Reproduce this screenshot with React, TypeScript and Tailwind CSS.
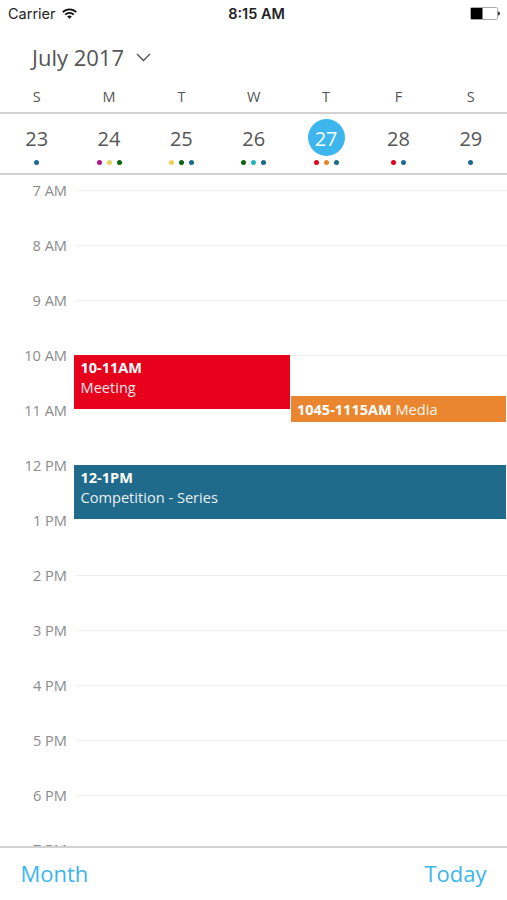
import React from "react";

interface Day {
  letter: string;
  date: number;
  dots: string[];
  selected?: boolean;
}

interface Hour {
  label: string;
  hideLine?: boolean;
}

interface CalendarEvent {
  time: string;
  title: string;
  inline?: boolean;
  className: string;
}

const days: Day[] = [
  { letter: "S", date: 23, dots: ["bg-[#1c6a8c]"] },
  { letter: "M", date: 24, dots: ["bg-[#b5128c]", "bg-[#ecd25c]", "bg-[#0b6410]"] },
  { letter: "T", date: 25, dots: ["bg-[#ecd25c]", "bg-[#0b6410]", "bg-[#1c6a8c]"] },
  { letter: "W", date: 26, dots: ["bg-[#0b6410]", "bg-[#23b5b5]", "bg-[#1c6a8c]"] },
  { letter: "T", date: 27, dots: ["bg-[#e3001b]", "bg-[#ea862c]", "bg-[#1c6a8c]"], selected: true },
  { letter: "F", date: 28, dots: ["bg-[#e3001b]", "bg-[#1c6a8c]"] },
  { letter: "S", date: 29, dots: ["bg-[#1c6a8c]"] },
];

const hours: Hour[] = [
  { label: "7 AM" },
  { label: "8 AM" },
  { label: "9 AM" },
  { label: "10 AM" },
  { label: "11 AM", hideLine: true },
  { label: "12 PM" },
  { label: "1 PM", hideLine: true },
  { label: "2 PM" },
  { label: "3 PM" },
  { label: "4 PM" },
  { label: "5 PM" },
  { label: "6 PM" },
  { label: "7 PM", hideLine: true },
];

// Events are placed over the hour grid, 55px per hour
const events: CalendarEvent[] = [
  {
    time: "10-11AM",
    title: "Meeting",
    className: "left-[74px] top-[179.5px] w-[215.5px] h-[54px] pt-[3.5px] bg-[#e6001b]",
  },
  {
    time: "1045-1115AM",
    title: "Media",
    inline: true,
    className: "left-[290.5px] top-[221px] w-[215px] h-[26px] pt-[3.5px] bg-[#ea862f]",
  },
  {
    time: "12-1PM",
    title: "Competition - Series",
    className: "left-[74px] top-[289.5px] w-[431.5px] h-[54px] pt-[3.5px] bg-[#206b8c]",
  },
];

const StatusBar: React.FC = () => (
  <div className="grid grid-cols-3 items-center h-[28px] pl-[8px] pr-[7px] font-['Inter',sans-serif] text-[14.5px] text-[#222]">
    <div className="flex items-center gap-[6px] -mt-px">
      <span>Carrier</span>
      <svg className="-mt-px" width="15" height="11" viewBox="0 0 15 11" fill="none" stroke="#111" strokeWidth="1.8">
        <path d="M0.8 4.2C4.4 0.4 10.6 0.4 14.2 4.2" />
        <path d="M3.2 6.7C5.6 4.2 9.4 4.2 11.8 6.7" />
        <path d="M7.5 10.8L5.2 8.5C6.5 7.3 8.5 7.3 9.8 8.5Z" fill="#111" stroke="none" />
      </svg>
    </div>
    <span className="-mt-px pl-[5px] text-center font-semibold">8:15 AM</span>
    <svg className="justify-self-end -mt-px" width="30" height="13" viewBox="0 0 30 13">
      <rect x="0.5" y="0.5" width="27" height="12" rx="1" fill="#fff" stroke="#aaa" />
      <rect x="1" y="1" width="11.5" height="11" fill="#000" />
      <path d="M28 4.5a2 2 0 0 1 0 4Z" fill="#333" />
    </svg>
  </div>
);

const DayCell: React.FC<{ day: Day }> = ({ day }) => (
  <div className="flex flex-col items-center pt-[5px]">
    <span
      className={
        day.selected
          ? "size-[37px] rounded-full bg-[#3cb6ec] text-white text-center text-[20px] leading-[39px]"
          : "size-[37px] text-center text-[20px] leading-[39px]"
      }
    >
      {day.date}
    </span>
    <div className="flex gap-[5px] mt-[4px]">
      {day.dots.map((dot, i) => (
        <span key={i} className={`size-[5px] rounded-full ${dot}`} />
      ))}
    </div>
  </div>
);

const EventBlock: React.FC<{ event: CalendarEvent }> = ({ event }) => (
  <div className={`absolute pl-[6.5px] text-[14.6px] leading-[19.5px] text-white ${event.className}`}>
    <span className={event.inline ? "font-bold text-[14.5px]" : "block font-bold text-[14.5px]"}>
      {event.time}
    </span>
    {event.inline && " "}
    <span className="text-white/90">{event.title}</span>
  </div>
);

const App: React.FC = () => {
  return (
    <div className="flex flex-col w-full h-[900px] overflow-hidden bg-white font-['Open_Sans',sans-serif] text-[#555]">
      <StatusBar />

      {/* Month picker */}
      <button className="flex items-center gap-[12px] h-[58px] pl-[32px] text-[22px]">
        July 2017
        <svg width="15" height="9" viewBox="0 0 15 9" fill="none" stroke="#555" strokeWidth="1.4">
          <path d="M1 1L7.5 7.5L14 1" />
        </svg>
      </button>

      {/* Weekday letters */}
      <div className="grid grid-cols-7 h-[28px] pl-[0.5px] border-b-2 border-[#d2d2d2] text-center text-[14.5px] leading-[22px]">
        {days.map((day) => (
          <span key={day.date}>{day.letter}</span>
        ))}
      </div>

      {/* Week */}
      <div className="grid grid-cols-7 h-[61px] pl-[0.5px] border-b-2 border-[#d2d2d2]">
        {days.map((day) => (
          <DayCell key={day.date} day={day} />
        ))}
      </div>

      {/* Timeline */}
      <div className="relative h-[671px] overflow-hidden">
        <div>
          {hours.map((hour) => (
            <div
              key={hour.label}
              className="flex h-[55px] text-[14.6px] leading-[31px] text-[#8c8c8c] last:leading-[28px]"
            >
              <span className="w-[67px] text-right">{hour.label}</span>
              {!hour.hideLine && <span className="flex-1 ml-[9px] mt-[15px] border-t border-[#efefef]" />}
            </div>
          ))}
        </div>
        {events.map((event) => (
          <EventBlock key={event.time} event={event} />
        ))}
      </div>

      {/* Footer */}
      <div className="flex flex-1 items-center justify-between px-[20.5px] pb-[2px] border-t-2 border-[#d2d2d2] text-[22px] text-[#3cb6ec]">
        <button>Month</button>
        <button>Today</button>
      </div>
    </div>
  );
};

export default App;
